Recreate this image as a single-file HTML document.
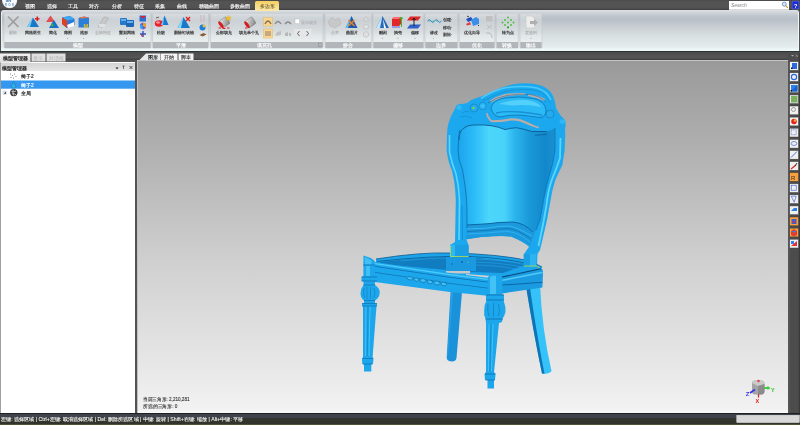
<!DOCTYPE html>
<html><head><meta charset="utf-8">
<style>
*{margin:0;padding:0;box-sizing:border-box}
html,body{width:800px;height:425px;overflow:hidden;background:#535353;font-family:"Liberation Sans",sans-serif}
.a{position:absolute}
#top{left:0;top:0;width:800px;height:10px;background:linear-gradient(#4a4a4a,#545454 2px,#525252 8px,#3c3c3c 10px)}
.mi{position:absolute;top:2px;font-size:5px;line-height:7px;color:#e8e8e8;white-space:nowrap}
#ribbon{left:1px;top:10px;width:798px;height:41px;border-radius:3px 3px 0 0;border-right:1px solid #eef6f6;border-left:1px solid #e8eef0;
 background:linear-gradient(#dde1e5 0px,#d2d7dc 2px,#bec5cc 6px,#b9c0c7 10px,#c6ccd1 16px,#d9e0e1 26px,#e3ebeb 36px,#e8f2f2 38.5px,#f2fafa 39px,#f2fafa 41px)}
#band{left:0;top:51px;width:800px;height:9px;background:linear-gradient(#2e3434 0px,#2e3434 1px,#4c4c4c 1px,#565656 7px,#444 8px)}
#lp{left:0;top:62px;width:135px;height:351px;background:#fff;border-left:1px solid #a0a0a0}
#lph{left:0;top:1px;width:134px;height:8px;background:linear-gradient(#d4d4d4,#e6e6e6)}
#vp{left:137px;top:60px;width:651px;height:353px;background:linear-gradient(#9a9a9a 0%,#b0b0b0 25%,#cecece 55%,#e6e6e6 85%,#f2f2f2 99%,#fafafa 100%);border-left:1px solid #c0c0c0;border-top:1px solid #c4c4c4}
#rt{left:788px;top:53px;width:12px;height:360px;background:#4c4c4c}
#sb{left:0;top:413px;width:800px;height:12px;background:linear-gradient(#202024 0px,#202024 1px,#40424c 1px,#40424c 4.5px,#34362e 5px,#32342c 10.5px,#4c5434 11px)}
.txt{position:absolute;font-size:5px;line-height:6px;white-space:nowrap}
svg{position:absolute;left:0;top:0;will-change:transform}
</style></head><body>
<div id="top" class="a"></div>
<div id="ribbon" class="a"></div>
<div id="band" class="a"></div>
<div id="lp" class="a"><div id="lph" class="a"></div></div>
<div id="vp" class="a"></div>
<div id="rt" class="a"></div>
<div id="sb" class="a"></div>

<svg width="800" height="425" viewBox="0 0 800 425" font-family="Liberation Sans">
<defs>
 <linearGradient id="tabY" x1="0" y1="0" x2="0" y2="1"><stop offset="0" stop-color="#f4cf62"/><stop offset="1" stop-color="#fde9a6"/></linearGradient>
 <linearGradient id="grpBg" x1="0" y1="0" x2="0" y2="1"><stop offset="0" stop-color="#ffffff" stop-opacity=".35"/><stop offset=".5" stop-color="#ffffff" stop-opacity=".15"/><stop offset="1" stop-color="#ffffff" stop-opacity=".45"/></linearGradient>
 <linearGradient id="panelG" x1="0" y1="0" x2="1" y2="0"><stop offset="0" stop-color="#1ca4ec"/><stop offset=".17" stop-color="#2cbcf8"/><stop offset=".32" stop-color="#4cd6fa"/><stop offset=".48" stop-color="#48d2fa"/><stop offset=".58" stop-color="#2cb6ee"/><stop offset=".74" stop-color="#1a98d8"/><stop offset=".9" stop-color="#1288cc"/><stop offset="1" stop-color="#1a90d0"/></linearGradient>
 <linearGradient id="tabG" x1="0" y1="0" x2="0" y2="1"><stop offset="0" stop-color="#f4f4f4"/><stop offset="1" stop-color="#d8d8d8"/></linearGradient>
</defs>

<!-- ===== top menu ===== -->
<circle cx="9.6" cy="0.6" r="7.6" fill="#e2e6ea"/>
<circle cx="9.6" cy="0.6" r="6.8" fill="#f8fafc"/>
<text x="5.5" y="1.6" font-size="4.2" font-weight="bold" fill="#2a6ab0">SR</text>
<text x="5" y="5.6" font-size="2.6" font-weight="bold" fill="#4a88c8" textLength="9">ROE</text>
<g font-size="5" fill="#f4f4f4" stroke="#f4f4f4" stroke-width=".15">
 <text x="25" y="8">视图</text><text x="47" y="8">选择</text><text x="68" y="8">工具</text>
 <text x="89" y="8">对齐</text><text x="112" y="8">分析</text><text x="134" y="8">特征</text>
 <text x="155" y="8">采集</text><text x="177" y="8">曲线</text><text x="199" y="8">精确曲面</text>
 <text x="230" y="8">参数曲面</text>
</g>
<rect x="255" y="1" width="24" height="10" rx="1.5" fill="url(#tabY)"/>
<text x="260" y="8" font-size="5" fill="#3a3320">多边形</text>
<!-- search -->
<rect x="729" y="1" width="60" height="8.8" fill="#fff"/>
<text x="731" y="7.3" font-size="5" font-style="italic" fill="#888">Search</text>
<circle cx="784.3" cy="4.2" r="2" fill="#d8e8f4" stroke="#4a7ab0" stroke-width=".7"/>
<line x1="785.8" y1="5.8" x2="787.8" y2="7.8" stroke="#c09a30" stroke-width="1.1"/>
<rect x="791" y="0" width="9" height="10" fill="#3a3a3a"/>
<rect x="792" y="1" width="7" height="8" fill="#1c2cd0" stroke="#8090e0" stroke-width=".5"/>
<text x="794" y="7.5" font-size="5.5" font-weight="bold" fill="#fff">?</text>

<!-- ===== ribbon groups ===== -->
<g stroke="#c2c6ca" stroke-width=".6" fill="url(#grpBg)">
 <rect x="4" y="13.3" width="147" height="35" rx="1.5"/>
 <rect x="152.5" y="13.3" width="56" height="35" rx="1.5"/>
 <rect x="210.5" y="13.3" width="112.5" height="35" rx="1.5"/>
 <rect x="325" y="13.3" width="46.7" height="35" rx="1.5"/>
 <rect x="373" y="13.3" width="50.8" height="35" rx="1.5"/>
 <rect x="425" y="13.3" width="32.8" height="35" rx="1.5"/>
 <rect x="459.3" y="13.3" width="35.5" height="35" rx="1.5"/>
 <rect x="496.3" y="13.3" width="22" height="35" rx="1.5"/>
 <rect x="520" y="13.3" width="22" height="35" rx="1.5"/>
</g>
<g fill="#b2b6ba">
 <rect x="4.3" y="42" width="146.4" height="6.2"/>
 <rect x="152.8" y="42" width="55.4" height="6.2"/>
 <rect x="210.8" y="42" width="111.9" height="6.2"/>
 <rect x="325.3" y="42" width="46.1" height="6.2"/>
 <rect x="373.3" y="42" width="50.2" height="6.2"/>
 <rect x="425.3" y="42" width="32.2" height="6.2"/>
 <rect x="459.6" y="42" width="34.9" height="6.2"/>
 <rect x="496.6" y="42" width="21.4" height="6.2"/>
 <rect x="520.3" y="42" width="21.4" height="6.2"/>
</g>
<g font-size="4.5" fill="#fff" stroke="#fff" stroke-width=".15" text-anchor="middle">
 <text x="77.5" y="47.2">模型</text><text x="180.5" y="47.2">平滑</text><text x="264" y="47.2">填充孔</text>
 <text x="348.3" y="47.2">拼合</text><text x="398.4" y="47.2">偏移</text><text x="441.4" y="47.2">边界</text>
 <text x="477" y="47.2">优化</text><text x="507.3" y="47.2">转换</text><text x="531" y="47.2">输出</text>
</g>
<rect x="318.5" y="43" width="3.5" height="3.5" fill="none" stroke="#888" stroke-width=".5"/>

<!-- button labels -->
<g font-size="4.4" fill="#3c3c3c" stroke="#3c3c3c" stroke-width=".18" text-anchor="middle">
 <text x="13" y="34.1" fill="#a4a4a4" stroke="#b4b4b4" stroke-width=".1">删除</text>
 <text x="33" y="34.1">网格医生</text>
 <text x="52.5" y="34.1">简化</text>
 <text x="67.5" y="34.1">薄图</text>
 <text x="83.5" y="34.1">流形</text>
 <text x="103" y="34.1" fill="#a4a4a4" stroke="#b4b4b4" stroke-width=".1">去除特征</text>
 <text x="126.5" y="34.1">重划网格</text>
 <text x="160.5" y="34.1">松散</text>
 <text x="184.3" y="34.1">删除钉状物</text>
 <text x="223.7" y="34.1">全部填充</text>
 <text x="249.3" y="34.1">填充单个孔</text>
 <text x="334.5" y="34.1" fill="#a4a4a4" stroke="#b4b4b4" stroke-width=".1">合并</text>
 <text x="351.5" y="34.1">曲面片</text>
 <text x="382.5" y="34.1">雕刻</text>
 <text x="398" y="34.1">抽壳</text>
 <text x="415" y="34.1">偏移</text>
 <text x="433.5" y="34.1">修改</text>
 <text x="472.3" y="34.1">优化向导</text>
 <text x="508" y="34.1">转为点</text>
 <text x="531" y="34.1" fill="#a4a4a4" stroke="#b4b4b4" stroke-width=".1">发送到</text>
</g>
<g font-size="4.4" fill="#3c3c3c" stroke="#3c3c3c" stroke-width=".15">
 <text x="443" y="21">创建·</text><text x="443" y="28.5">移动·</text><text x="443" y="36">删除·</text>
 <text x="300.5" y="23.8" fill="#a8a8a8" stroke="#b8b8b8" stroke-width=".05">显示填充</text>
</g>
<g fill="#666">
 <circle cx="67.5" cy="38.3" r=".45"/><circle cx="83.5" cy="38.3" r=".45"/><circle cx="126.5" cy="38.3" r=".45"/>
 <circle cx="382.5" cy="38.3" r=".45"/><circle cx="398" cy="38.3" r=".45"/><circle cx="415" cy="38.3" r=".45"/>
 <circle cx="433.5" cy="38.3" r=".45"/><circle cx="531" cy="38.3" r=".45"/>
</g>

<!-- ribbon icons -->
<!-- delete X -->
<path d="M8 16.5 L18.5 27 M18.5 16.5 L8 27" stroke="#9c9c9c" stroke-width="1.6" fill="none"/>
<!-- mesh doctor -->
<path d="M33 17.5 L39 27 L27 27 Z" fill="#1a78c8"/><path d="M33 17.5 L30 27 L27 27 Z" fill="#70d0f0"/>
<path d="M36.5 16.5 h1.5 v1.5 h1.5 v1.5 h-1.5 v1.5 h-1.5 v-1.5 h-1.5 v-1.5 h1.5z" fill="#e02020"/>
<!-- simplify -->
<path d="M50.5 15.5 L55 22 L46 22 Z" fill="#e05050"/><path d="M54 20 L59 28 L49 28 Z" fill="#1a70c8"/><path d="M51 23 l3 2 l-2 2z" fill="#30c030"/>
<!-- shell -->
<path d="M62 17.5 L70 16 L74.5 19 L74.5 25 L67 28 L62 24 Z" fill="#2a7ad8"/><path d="M62 17.5 L70 16 L74.5 19 L67 20.5Z" fill="#40a8f0"/><path d="M62 17.5 L67 20.5 L67 28 L62 24Z" fill="#e04020"/><path d="M67 25 L74 22 L74 26 L68 28Z" fill="#fff"/>
<!-- manifold -->
<path d="M78.5 18 L84 16.5 L89 17.5 L89 27.5 L78.5 27.5Z" fill="#2a80d8"/><path d="M78.5 18 L84 16.5 L89 17.5 L83 18.5Z" fill="#f07040"/><text x="83.5" y="27.5" font-size="6" font-weight="bold" fill="#e8c020">M</text>
<!-- remove feature (gray) -->
<path d="M98 27 L104 17 L108.5 18 L103 27Z" fill="#c8c8c8" stroke="#a0a0a0" stroke-width=".5"/><path d="M99 24 h6 v3 h-6z" fill="#e0e0e0"/>
<!-- remesh -->
<rect x="120" y="18" width="7" height="7" rx="1" fill="#2878c8"/><rect x="126" y="20" width="8" height="7" rx="1" fill="#1e66b8"/><path d="M121 19 h5 v2 h-5z M127 21 h6 v2 h-6z" fill="#60b0f0"/>
<!-- small 3 icons -->
<rect x="139.5" y="15.5" width="6.5" height="6" fill="#2a70d0"/><path d="M140 16 l3 2.5 l3 -2.5z" fill="#e02030"/>
<path d="M140 24 l3 -1.5 l3 1.5 v4 l-3 1.5 l-3 -1.5z" fill="#7050d0"/><path d="M143 22.5 l3 1.5 v4 l-3 -2z" fill="#f0a020"/><path d="M140 24 l3 1.5 v4 l-3 -1.5z" fill="#30a0f0"/>
<path d="M140 34 h6 M143 31 v6" stroke="#3050c0" stroke-width="1.4"/><circle cx="142" cy="35.5" r="1" fill="#e03020"/>
<!-- smooth relax -->
<ellipse cx="159" cy="23.5" rx="4.2" ry="3.2" fill="#e82030"/><ellipse cx="158" cy="22.5" rx="2" ry="1.2" fill="#ff9090"/>
<path d="M164.5 15.5 L168.5 25 L161 25 Z" fill="#1a78d0"/><path d="M164.5 15.5 L163 25 L161 25Z" fill="#70c8f0"/>
<path d="M156 18 l3 -1" stroke="#333" stroke-width=".7"/>
<!-- remove spikes -->
<path d="M183.5 17 L190 28 L177.5 28 Z" fill="#1a78c8"/><path d="M183.5 17 L181 28 L177.5 28Z" fill="#80d8f8"/>
<path d="M186 17 l4 4 M190 17 l-4 4" stroke="#e02020" stroke-width="1.3"/>
<!-- smooth small -->
<path d="M201 15 v7 M204 15 v7" stroke="#d0b0b8" stroke-width="1"/>
<circle cx="202.5" cy="27.5" r="3" fill="#1a80e0"/><circle cx="204" cy="26" r="1.4" fill="#f0c020"/>
<path d="M199.5 35 l4 -2 l3 1.5 l-4 2z" fill="#8a5a30"/>
<!-- fill all -->
<defs><linearGradient id="buck" x1="0" y1="0" x2="1" y2="1"><stop offset="0" stop-color="#f0f0f0"/><stop offset=".5" stop-color="#b8b8b8"/><stop offset="1" stop-color="#808080"/></linearGradient></defs>
<g transform="rotate(-35 224 22)"><rect x="219.5" y="18.5" width="9" height="8" rx="1.5" fill="url(#buck)" stroke="#707070" stroke-width=".4"/><ellipse cx="220" cy="22.5" rx="1.6" ry="4" fill="#d02020"/></g>
<path d="M228.5 15.2 l.9 1.9 l2 .3 l-1.5 1.4 l.4 2 l-1.8 -1 l-1.8 1 l.4 -2 l-1.5 -1.4 l2 -.3z" fill="#f4c418" stroke="#c09010" stroke-width=".2"/>
<path d="M218.5 28 h2.5 M222.5 28.5 h3 M227 28 h2.5 M220 25.8 h1.5" stroke="#d82020" stroke-width="1"/>
<!-- fill single -->
<g transform="rotate(-35 250 22)"><rect x="245.5" y="18.5" width="9" height="8" rx="1.5" fill="url(#buck)" stroke="#707070" stroke-width=".4"/><ellipse cx="246" cy="22.5" rx="1.6" ry="4" fill="#d02020"/></g>
<path d="M245 28 h2.5 M246 25.8 h1.5" stroke="#d82020" stroke-width="1"/>
<!-- small fill icons -->
<rect x="263.5" y="17.7" width="9" height="8.3" fill="#f8d890" stroke="#e8b860" stroke-width=".5"/>
<rect x="263.5" y="29" width="9" height="9" fill="#f8d890" stroke="#e8b860" stroke-width=".5"/>
<path d="M265 24 q3 -6 6 0" fill="none" stroke="#8a7050" stroke-width="1.4"/>
<path d="M275 24 q3 -5 6 0" fill="none" stroke="#8a8a8a" stroke-width="1.4"/>
<path d="M285 24 q3 -4 6 0" fill="none" stroke="#8a8a8a" stroke-width="1.4"/>
<rect x="265" y="31" width="6" height="5" fill="#c8a880"/>
<path d="M275 36 l2 -4 l4 -1 v4z" fill="#c0c0c0"/>
<path d="M285 36 v-3 l3 -1 v4z M289 33 h2 v3 h-2z" fill="#b8b8b8"/>
<rect x="295" y="19" width="4.5" height="4.7" fill="#fff" stroke="#b0b0b0" stroke-width=".4"/>
<rect x="294" y="29" width="17.5" height="9" fill="#e4e6e8"/>
<path d="M299.5 31 l-2 2.5 l2 2.5 M306.5 31 l2 2.5 l-2 2.5" stroke="#444" stroke-width=".8" fill="none"/>
<!-- merge (gray) -->
<path d="M328 22 l4 -5 l3 3 l4 -2 l2 6 l-6 4 l-5 -2z" fill="#c8c8c8" stroke="#a8a8a8" stroke-width=".4"/>
<!-- patch -->
<path d="M351.5 16 L357.5 28 L345.5 28Z" fill="#1e5aa8"/><path d="M351.5 16 L348 28 L345.5 28Z" fill="#60c0f0"/>
<path d="M348.5 20 l6 6 M354.5 20 l-6 6" stroke="#f08020" stroke-width="1.4"/>
<g fill="#e0e0e0" stroke="#b0b0b0" stroke-width=".5"><path d="M363.5 21 l2.5 -4.5 l2.5 4.5z"/><rect x="363.5" y="24.5" width="5" height="4.5" rx="2"/><path d="M363.5 33 l2.5 -1.5 l2.5 1.5 v3 l-2.5 1.5 l-2.5 -1.5z"/></g>
<!-- sculpt -->
<path d="M382.5 16 L389 28 L376 28Z" fill="#2a68b8"/><path d="M382.5 16 L380 28 L376 28Z" fill="#c0e8f8"/><path d="M383 19 L386 28 L384 28Z" fill="#fff"/>
<!-- shell thicken -->
<path d="M392 19 l2 -2 h7 v7 l-2 2 h-7z" fill="#e02828"/><path d="M392 19 l2 -2 h7 l-2 2z" fill="#ff7070"/><path d="M401.5 27 v-10 M400 19 l1.5 -2 l1.5 2" stroke="#30c030" stroke-width="1" fill="none"/><path d="M392 27 h8" stroke="#6060e0" stroke-width="1"/>
<!-- offset -->
<path d="M410 16.5 h11 l-3 4 h-11z" fill="#e02828"/><path d="M410 24.5 h11 l-3 4 h-11z" fill="#3060c8"/><path d="M414 18 v8 M412.5 20 l1.5 -2 l1.5 2" stroke="#111" stroke-width=".9" fill="none"/>
<!-- boundary modify -->
<path d="M427.5 21 q1.7 -3 3.5 0 t3.5 0 t3.5 0 t3.5 0" fill="none" stroke="#1a8ad8" stroke-width="1"/>
<g fill="#30a030"><circle cx="429" cy="21" r=".6"/><circle cx="433" cy="21" r=".6"/><circle cx="437" cy="21" r=".6"/></g>
<!-- optimize wizard -->
<path d="M466 19 l5 -2 l2 3 l-5 2z" fill="#2050c0"/><path d="M471 20 l5 -3 l3 2 v5 l-6 2z" fill="#3a90e8"/><path d="M466 24 l4 -2 l1 2.5 l-4 1z" fill="#e04040"/>
<path d="M469 17 l-2 -1 M478 25 l1 1" stroke="#222" stroke-width=".8"/>
<g fill="#c0c0c0"><rect x="486" y="16" width="6.5" height="5.5"/></g>
<path d="M487 25 l5 4 M487 29 l5 -4" stroke="#b8b8b8" stroke-width=".8"/>
<path d="M486 33 h4 l2 3 v2" stroke="#b8b8b8" stroke-width="1" fill="none"/>
<!-- convert to points -->
<g fill="#50c040"><circle cx="508" cy="17.5" r="1"/><circle cx="505" cy="20" r="1"/><circle cx="511" cy="20" r="1"/><circle cx="502.5" cy="22.5" r="1"/><circle cx="508" cy="22.5" r="1"/><circle cx="513.5" cy="22.5" r="1"/><circle cx="505" cy="25" r="1"/><circle cx="511" cy="25" r="1"/><circle cx="508" cy="27.3" r="1.1" fill="#30a020"/></g>
<!-- send to (gray) -->
<path d="M526 16 h6 l3 3 v9 h-9z" fill="#ececec" stroke="#c0c0c0" stroke-width=".5"/><path d="M530 21 h4 v-2 l4 3.5 l-4 3.5 v-2 h-4z" fill="#b0b0b0"/>

<!-- ribbon bottom edge -->
<rect x="1" y="48.6" width="798" height="2.4" fill="#eef8f8"/>

<!-- ===== left panel tabs ===== -->
<rect x="0" y="53.5" width="30.5" height="9" fill="url(#tabG)"/>
<rect x="31.5" y="53.5" width="14" height="8" fill="#f0f0f0" opacity=".9"/>
<rect x="46.5" y="53.5" width="19" height="8" fill="#f0f0f0" opacity=".9"/>
<g font-size="4.6">
 <text x="2.5" y="60" fill="#222" stroke="#222" stroke-width=".2">模型管理器</text>
 <text x="33" y="59.6" fill="#b0b0b0">显示</text>
 <text x="48.5" y="59.6" fill="#b0b0b0">对话框</text>
 <text x="2" y="69.6" fill="#222" stroke="#222" stroke-width=".2">模型管理器</text>
</g>
<path d="M115.5 67.5 h3 l-1.5 1.8z" fill="#111"/>
<path d="M123.5 66 v3 M122.5 66 h2" stroke="#222" stroke-width=".6"/>
<path d="M129.5 66 l3 3 M132.5 66 l-3 3" stroke="#222" stroke-width=".7"/>
<!-- tree -->
<rect x="1" y="80.5" width="134" height="8.2" fill="#3497f0"/>
<g font-size="4.8" stroke-width=".15">
 <text x="21" y="78.2" fill="#222" stroke="#222">椅子2</text>
 <text x="21" y="86.8" fill="#fff" stroke="#fff">椅子2</text>
 <text x="21" y="95.3" fill="#222" stroke="#222">全局</text>
</g>
<g fill="#666"><circle cx="10.5" cy="74" r=".5"/><circle cx="12.5" cy="75.5" r=".5"/><circle cx="11" cy="77.5" r=".5"/><circle cx="14.5" cy="74" r=".5"/><circle cx="16" cy="76.5" r=".5"/><circle cx="13.5" cy="78" r=".5"/></g>
<path d="M13.5 81.5 l2.5 5 a2.6 2.6 0 0 1 -5 0z" fill="#30b0e8" stroke="#106090" stroke-width=".4"/>
<rect x="3" y="91" width="3.5" height="3.5" fill="#dfe6f0" stroke="#b0b8c0" stroke-width=".3"/><path d="M4 93.8 l2 -2 v2z" fill="#222"/>
<circle cx="13.8" cy="92.6" r="3.7" fill="#3a3a3a"/><path d="M11.5 91.5 q2 1 4.5 -.5 M12 94 q2 -1 4 .8 M13.2 89.5 q-1 3 .5 6" stroke="#f0f0f0" stroke-width=".7" fill="none"/>

<!-- ===== viewport tabs ===== -->
<path d="M139.5 60 L146 53.5 H160 V60Z" fill="#e8eaec"/>
<rect x="160.5" y="53.5" width="17" height="6.5" fill="#f4f4f4"/>
<rect x="178.5" y="53.5" width="15" height="6.5" fill="#f4f4f4"/>
<g font-size="4.6" stroke-width=".15">
 <text x="147.5" y="58.8" fill="#222" stroke="#222">图形</text>
 <text x="163.5" y="58.8" fill="#444" stroke="#444">开始</text>
 <text x="181" y="58.8" fill="#444" stroke="#444">脚本</text>
</g>
<path d="M791 55 h3 l-1.5 1.5z" fill="#aaa"/><path d="M795.5 54.5 l2.5 2.5 M798 54.5 l-2.5 2.5" stroke="#aaa" stroke-width=".5"/>

<!-- ===== right toolbar ===== -->
<rect x="788" y="60" width="2" height="353" fill="#555"/>
<rect x="798.8" y="53" width="1.2" height="360" fill="#3a3a3a"/>
<g id="rtb" stroke="#3c3c3c" stroke-width=".5">
 <rect x="789.7" y="61.6" width="8.8" height="8.8" fill="#f0f0f0"/>
 <rect x="789.7" y="72.7" width="8.8" height="8.8" fill="#f0f0f0"/>
 <rect x="789.7" y="83.8" width="8.8" height="8.8" fill="#f0f0f0"/>
 <rect x="789.7" y="94.9" width="8.8" height="8.8" fill="#e8e8e8"/>
 <rect x="789.7" y="106" width="8.8" height="8.8" fill="#f0f0f0"/>
 <rect x="789.7" y="117.1" width="8.8" height="8.8" fill="#f0f0f0"/>
 <rect x="789.7" y="128.2" width="8.8" height="8.8" fill="#f0f0f0"/>
 <rect x="789.7" y="139.3" width="8.8" height="8.8" fill="#f0f0f0"/>
 <rect x="789.7" y="150.4" width="8.8" height="8.8" fill="#f0f0f0"/>
 <rect x="789.7" y="161.5" width="8.8" height="8.8" fill="#f0f0f0"/>
 <rect x="789.7" y="172.6" width="8.8" height="8.8" fill="#f8a040"/>
 <rect x="789.7" y="183.7" width="8.8" height="8.8" fill="#f0f0f0"/>
 <rect x="789.7" y="194.8" width="8.8" height="8.8" fill="#f0f0f0"/>
 <rect x="789.7" y="205.9" width="8.8" height="8.8" fill="#f0f0f0"/>
 <rect x="789.7" y="217" width="8.8" height="8.8" fill="#f8a040"/>
 <rect x="789.7" y="228.1" width="8.8" height="8.8" fill="#f8a040"/>
 <rect x="789.7" y="239.2" width="8.8" height="8.8" fill="#f0f0f0"/>
</g>
<g>
 <rect x="792" y="63" width="5" height="6" fill="#2a6ae0"/><rect x="791" y="67.5" width="1.5" height="1.5" fill="#111"/>
 <circle cx="794" cy="77" r="2.6" fill="none" stroke="#2a6ae0" stroke-width="1.2"/>
 <path d="M791 91.5 v-6.5 h6.5 v6.5z" fill="#2a80e8"/><path d="M791 91.5 l6.5 -6.5 v6.5z" fill="#1a60c8"/><rect x="790.5" y="90" width="1.5" height="1.5" fill="#111"/>
 <rect x="791" y="96" width="6.5" height="6.5" fill="#7ab060"/>
 <circle cx="793.5" cy="109.5" r="2" fill="none" stroke="#888" stroke-width=".8"/>
 <circle cx="794" cy="121.5" r="2.8" fill="#e82020"/><circle cx="795" cy="120.5" r="1.3" fill="#f0b020"/>
 <rect x="791.2" y="129.8" width="5" height="5" fill="none" stroke="#2a50d0" stroke-width=".6" stroke-dasharray="1 .6"/>
 <ellipse cx="794" cy="143.5" rx="2.8" ry="2" fill="none" stroke="#2a50d0" stroke-width=".6"/>
 <path d="M791 157.5 l6 -6" stroke="#2a50d0" stroke-width=".8"/><path d="M791 169 l5 -4" stroke="#e02020" stroke-width="1.2"/><path d="M795 166 l2 -3" stroke="#333" stroke-width="1"/>
 <text x="791" y="180" font-size="6" fill="#333">R</text>
 <rect x="791.2" y="185.2" width="5" height="5" fill="none" stroke="#2a50d0" stroke-width=".6"/>
 <path d="M791.2 196.2 h5 l-2 6z" fill="none" stroke="#2a50d0" stroke-width=".6"/>
 <path d="M791 211 l3 -3 h3 v3z" fill="#2a80e8"/>
 <path d="M791.5 219 h5 v5 h-5z" fill="#3a60d0"/><path d="M792 222 h4" stroke="#e03030" stroke-width="1"/>
 <path d="M791 231 l3 -2 l3 2 v4 l-3 1.5 l-3 -1.5z" fill="#e04030"/><path d="M791 231 l3 1.5 l3 -1.5" fill="#3080f0"/>
 <path d="M791 246 l6 -5 v5z" fill="#e03030"/><path d="M791 241 h3 v3 h-3z" fill="#3080f0"/>
</g>

<!-- ===== viewport info ===== -->
<g font-size="4.9" fill="#333" stroke="#333" stroke-width=".12">
 <text x="143" y="401.2" textLength="46.5" lengthAdjust="spacingAndGlyphs">当前三角形: 2,210,281</text>
 <text x="143" y="408.2" textLength="34.5" lengthAdjust="spacingAndGlyphs">所选的三角形: 0</text>
</g>

<!-- ===== status bar ===== -->
<text x="1" y="421" font-size="5.1" fill="#f4f4f4" stroke="#f4f4f4" stroke-width=".12" textLength="242.5" lengthAdjust="spacingAndGlyphs">左键: 选择区域 | Ctrl+左键: 取消选择区域 | Del: 删除所选区域 | 中键: 旋转 | Shift+右键: 缩放 | Alt+中键: 平移</text>
<rect x="736.8" y="415.3" width="62.5" height="7.2" fill="#d8d8d8" stroke="#f0f0f0" stroke-width=".5"/>

<!-- ===== triad ===== -->
<g>
 <path d="M752 383 Q752 380.5 755 380.5 L761 380.5 Q764.5 380.5 764.5 384 L764.5 391 Q764.5 394.5 761 394.5 L755 394.5 Q752 394.5 752 391Z" fill="#a4a4a4"/>
 <path d="M752 383 Q752 380.5 755 380.5 L761 380.5 Q764.5 380.5 764.5 384 L758 386 Z" fill="#cacaca"/>
 <path d="M758 386 L764.5 384 L764.5 391 Q764.5 394.5 761 394.5 L758 394.5Z" fill="#8c8c8c"/>
 <circle cx="758.5" cy="381" r="1.3" fill="#e04848"/>
 <path d="M755 389.5 L750 393" stroke="#3838e8" stroke-width="1.8"/>
 <text x="745.8" y="396" font-size="6" font-weight="bold" fill="#3434e8">Z</text>
 <path d="M764 388 h4.5" stroke="#38c838" stroke-width="1.8"/><path d="M767.5 386 l3 2 l-3 2z" fill="#38c838"/>
 <text x="771" y="392" font-size="5.5" font-weight="bold" fill="#30c030">Y</text>
 <path d="M758.5 394 v3.5" stroke="#d03030" stroke-width="1.3"/>
 <text x="755.6" y="403.2" font-size="5.5" font-weight="bold" fill="#e02020">X</text>
</g>

<!-- ===== chair ===== -->
<g id="chair">
 <!-- rear legs -->
 <path d="M450.9 286 L462.5 286 L456.5 358 Q456 361.5 451.5 361.5 Q446.5 361 446.7 357.5 Z" fill="#1a92da"/>
 <path d="M451.5 288 L453.5 288 L448 356 L447.2 356Z" fill="#28a8ec" opacity=".7"/>
 <path d="M525.6 284 L540 284 Q542 330 551.5 371 Q549 374.5 542 373.5 C535 340 530 310 525.6 284Z" fill="#34c2f8"/>
 <path d="M525.6 284 L529.5 284 C533 310 538 340 544.5 373.8 L542 373.5 C535 340 530 310 525.6 284Z" fill="#0e74b6"/>
 <!-- back outer -->
 <path d="M455.4 108 Q456 104.5 459.5 104 Q464 104 467 103 Q472 99 478 97.5 Q485 95.5 490 93 Q502 86 515 84 Q530 82 541 85.5 Q550 89 553 96 Q555.5 102 556 108 Q558 112 561 116 Q565 119 565.5 123 Q566 126 565 128 Q565.5 135 565 140 L564.7 150 L562.4 165 L557.6 175 L555.3 180 Q552 190 550.6 200 L547 220 L542.4 240 L540 250 L537.5 254 L537 266 L524 266 L524 254 L529 246.7 Q522 241 511 236.6 Q503 235 481.3 237.1 L466.4 239.2 L468.5 245 L468.5 257 L450 257 L450 245 L455 242 L455.8 200 Q455.5 190 454 180 L451.8 170 Q448 162 446.6 150 L447 135 Q447 130 448 125 Q450 118 452 114 Q454 111 455.4 108Z" fill="#1ca8ee"/>
 <!-- crest openings -->
 <path d="M490 100.4 Q497 96 505 94 Q515 92.5 525 93 L526 95 Q515 95 506 96.5 Q498 98.5 491 102.5Z" fill="#bcaca4"/>
 <path d="M528 94 Q538 95 545 99 L544 101 Q537 97.5 528 96Z" fill="#bcaca4"/>
 <path d="M487.4 112.7 Q489 118 492 120.2 Q502 120 511 118.3 Q516 118 520.4 119.3 Q528 122 535.5 125.8 L539 126.8 L538.5 128.5 Q530 126 520 121.5 Q515 120.3 511 120.5 Q501 122.5 491.5 122.3 Q487 119 486 113.5Z" fill="#bcaca4"/>
 <!-- crest cushion -->
 <path d="M491 108 Q493 100 505 98 Q520 96 533 98.5 Q545 101 546 110 Q546 117 540 117.5 Q530 116 520 115 Q510 114.5 500 117 Q493 116 491 108Z" fill="#2cbaf6"/>
 <path d="M499 104 Q510 99.5 526 100 Q538 101.5 541 107 Q528 104 512 105.5Z" fill="#64dcfc" opacity=".7"/>
 <path d="M491 108 Q493 100 505 98 Q520 96 533 98.5 Q545 101 546 110 Q546 117 540 117.5 Q530 116 520 115 Q510 114.5 500 117 Q493 116 491 108Z" fill="none" stroke="#0e6aa8" stroke-width=".7"/>
 <path d="M496 113 Q505 111 520 112 Q532 113 542 115" fill="none" stroke="#1a90d4" stroke-width="1.4"/>
 <path d="M488 103 Q497 97 507 95.5 Q520 93.5 530 94.5 Q540 96 546 102" fill="none" stroke="#0e64a2" stroke-width=".5"/>
 <path d="M481 98.5 Q490 92 502 88.5 Q520 85 537 88 Q547 91 551 100" fill="none" stroke="#4ccaf8" stroke-width="1.5"/>
 <path d="M483 101 Q494 95 505 91.5 Q522 88 536 90.5 Q546 93 550 103" fill="none" stroke="#1282c4" stroke-width=".5"/>
 <!-- scrolls -->
 <circle cx="474" cy="108" r="4" fill="#22acee" stroke="#1478b8" stroke-width=".6"/>
 <circle cx="482.7" cy="106" r="3.6" fill="#2cb4f4" stroke="#1478b8" stroke-width=".6"/>
 <circle cx="482.7" cy="106" r="1.5" fill="#3cc4fa"/>
 <circle cx="550" cy="114" r="4" fill="#22acee" stroke="#1478b8" stroke-width=".6"/>
 <circle cx="459" cy="107.5" r="2.6" fill="#30b8f6"/>
 <ellipse cx="562.5" cy="121.5" rx="3" ry="2.3" fill="#30b8f6"/>
 <path d="M462 113 q4 -3 8 -1 M460 117 q6 -2 12 1" stroke="#1480c0" stroke-width=".5" fill="none"/>
 <rect x="472.5" y="107" width="2" height="2" fill="#80e020"/>
 <!-- inner panel -->
 <path d="M459 140 Q459 132 463 128.7 Q467 125 473 125 Q485 124.5 492 125.8 Q499 127 505 129.6 Q511 128 516.6 127.7 Q524 129 531.7 131.5 L546.8 131.5 Q552 130 555 128 L555 150 Q553 165 549.4 175 Q546 187 543.5 200 L540 220 L535 232 Q524 223 513 222 Q500 222 487 223.8 L467 225 L467 220 Q467 200 465.6 190 Q464 178 462.5 170 Q458 160 458 150 Q458.5 140 459.5 130Z" fill="url(#panelG)"/>
 <path d="M459 140 Q459 132 463 128.7 Q467 125 473 125 Q485 124.5 492 125.8 Q499 127 505 129.6 Q511 128 516.6 127.7 Q524 129 531.7 131.5 L546.8 131.5" fill="none" stroke="#0c5a90" stroke-width=".9"/>
 <path d="M535 135.3 L546.8 134.3" fill="none" stroke="#0c5a90" stroke-width=".7"/>
 <path d="M467 225 L487 223.8 Q500 222 513 222 Q524 223 533 232" fill="#1a94d8" stroke="none"/>
 <path d="M466.5 225 L487 223.8 Q500 222 513 222 Q524 223 535 232 L530 246 Q522 241 511 236.6 Q503 235 481.3 237.1 L466.4 239.2Z" fill="#1c98dc"/>
 <path d="M467 225 L487 223.8 Q500 222 513 222 Q524 223 533 232" fill="none" stroke="#0a5a90" stroke-width=".8"/>
 <path d="M467 229 L487 228 Q500 226 508 226 Q516 226.5 532 236" fill="none" stroke="#36bcf4" stroke-width=".9"/>
 <path d="M467 231.5 L487 230.5 Q500 228.5 508 228.5 Q517 229 531 239" fill="none" stroke="#0e66a4" stroke-width=".6"/>
 <path d="M467 234 L487 233 Q500 231.5 508 231.5 Q518 232 530 242" fill="none" stroke="#34b8f2" stroke-width=".8"/>
 
 <path d="M459.5 130 Q458.5 140 458 150 Q458 160 462.5 170 Q464 178 465.6 190 Q467 200 467 220 L467 228" fill="none" stroke="#0e64a0" stroke-width=".7"/>
 <path d="M555 128 L555 150 Q553 165 549.4 175 Q546 187 543.5 200 L540 220 L536 230" fill="none" stroke="#0e64a0" stroke-width=".6"/>
 <path d="M449.5 135 L449.5 152 Q452 164 456 174 Q459 186 459.5 200 L459 240" fill="none" stroke="#5cd6fc" stroke-width="1.6"/>
 <path d="M462 205 L462.5 240" fill="none" stroke="#1280c4" stroke-width=".6"/>
 <path d="M560.5 138 L560 158 Q556 170 552.5 178 Q548 190 546.5 205 L543.5 222 L538.5 246" fill="none" stroke="#5cd6fc" stroke-width="1.8"/>
 <!-- seat back / top surface -->
 <path d="M376 259 Q420 252 450 253 Q500 254 530 261 L542 267 L541 272 L503 278 L489 279 L450 274 L376 264Z" fill="#1ca4ea"/>
 <path d="M380 262 Q440 256 470 257 L528 264 L503 273 L470 272 L380 264Z" fill="#127cc0"/>
 <path d="M377 261.5 Q430 255.5 470 256.5 Q505 258 532 264.5" fill="none" stroke="#0a4e80" stroke-width=".7"/>
 <path d="M400 261 Q440 257 470 258 M470 259 Q500 259 527 265 M470 262 Q498 262 522 267 M470 265 Q496 265 516 269" stroke="#2ca8ea" stroke-width=".5" fill="none"/>
 <rect x="446" y="257" width="30" height="14" fill="#1a98e0"/>
 <path d="M446 271 L470 271 L470 273.5 L446 273.5Z" fill="#c8c8c8"/>
 <path d="M466 274 L492 276 L490 278.5 L466 276.5Z" fill="#d0d0d0"/>
 <path d="M376 259 Q420 252 450 253 Q500 254 530 261 L542 267" fill="none" stroke="#0c5a90" stroke-width=".8"/>
 <!-- blocks -->
 <path d="M450 245 L468.6 245 L468.6 257 L450 257Z" fill="#1a9ee4"/>
 <path d="M450 245 L455 245 L455 257 L450 257Z" fill="#30b8f4"/>
 <path d="M450.5 246 V256.5 H468.5" fill="none" stroke="#b8e040" stroke-width=".8"/>
 <path d="M523.6 254 L536.3 254 L536.3 266.5 L523.6 266.5Z" fill="#1a9ee4"/>
 <path d="M530 254 L536.3 254 L536.3 266.5 L530 266.5Z" fill="#2cb4f2"/>
 <path d="M524 266 H536.3 L540 268" fill="none" stroke="#b8e040" stroke-width=".8"/>
 <circle cx="452" cy="264" r=".8" fill="#0e66a4"/><circle cx="462" cy="262" r=".9" fill="#0e66a4"/><circle cx="468" cy="262" r=".6" fill="#a0e040"/>
 <!-- front apron -->
 <path d="M375 262 L450 273 L490 278 L490 296 L450 292 L375 282Z" fill="#1ca6ec"/>
 <path d="M375 263 L450 274 L490 279 L490 280.2 L450 275.2 L375 264.2Z" fill="#50ccf8"/>
 <path d="M375 266 L450 277 L490 282 L490 282.8 L450 277.8 L375 266.8Z" fill="#0e6eb0"/>
 <path d="M375 272 L450 283 L490 288 L490 288.8 L450 283.8 L375 272.8Z" fill="#1074b6"/>
 <g fill="#3cc0f6" stroke="#0c5e9c" stroke-width=".55">
  <ellipse cx="410" cy="278.3" rx="3.2" ry="1.6" transform="rotate(10 410 278.3)"/>
  <ellipse cx="416.5" cy="279.6" rx="2.6" ry="1.7" transform="rotate(10 416.5 279.6)"/>
  <ellipse cx="423" cy="280.6" rx="3" ry="1.9" transform="rotate(10 423 280.6)"/>
  <ellipse cx="430" cy="281.9" rx="2.6" ry="1.8" transform="rotate(10 430 281.9)"/>
  <ellipse cx="437" cy="283" rx="3" ry="1.9" transform="rotate(10 437 283)"/>
  <ellipse cx="443.8" cy="284" rx="2.8" ry="1.8" transform="rotate(10 443.8 284)"/>
 </g>
 <!-- right apron -->
 <path d="M502 277 L541 268.8 Q543.2 269.3 543 272 L542.4 287.4 L502 293.5Z" fill="#1a9ae0"/>
 <path d="M502 279.5 L542.6 271.4 L542.6 273.2 L502 281.3Z" fill="#4cc6f6"/>
 <path d="M502 284.6 L542.5 281.8 L542.5 282.8 L502 285.6Z" fill="#0e66a6"/>
 <path d="M502 277 L541 268.8" stroke="#0a4676" stroke-width="1.1"/>
 <!-- left front leg -->
 <path d="M363.4 255.6 Q370 257 374.7 261 L375 265 L375 276 L377 277 L377 281 L375 281.5 L375 285 Q380 288 379.7 293 Q379.5 298 375 300.5 L375 303 L377 303.5 L377 306 L376.5 306 L372.6 357 L373.5 358.5 L373 364 L371.3 364.5 L371.3 371.4 L364 371.4 L364 364.5 L362.2 364 L362 358.5 L363 357 L363 306 L362 306 L362 303.5 L364 303 L364 300.5 Q360.2 298 360.6 293 Q361 288 363.5 285 L363.5 281.5 L361.5 281 L361.5 277 L363.4 276Z" fill="#1ca6ec"/>
 <path d="M364.5 257 Q369 258.5 372 261 L371 264.5 L365 264.5Z" fill="#40c0f6"/>
 <path d="M366 266 L370 266 L370 276 L366 276Z" fill="#40c0f6"/>
 <path d="M363 265 H375 M361.5 277 H377 M361.5 281 H377 M363.5 285 H375 M364 300.5 H375 M362 303.5 H377 M362 306 H377 M362.5 358.5 H373 M363 364 H372.5" stroke="#0e66a6" stroke-width=".6"/>
 <path d="M366 306.5 L365.5 356 M370 306.5 L369 356" stroke="#4ccaf8" stroke-width=".8"/>
 <path d="M368 306.5 L367.3 356" stroke="#1276b8" stroke-width=".5"/>
 <path d="M364 288 Q363 293 364.5 298 M367 287 V299 M370.5 287 V299 M374 288 Q376 293 374 298" stroke="#1274b6" stroke-width=".5" fill="none"/>
 <!-- right front leg -->
 <path d="M487.6 279 Q487.6 274.4 495 274.4 Q502.4 274.4 502.4 279 L502.4 294.5 L504 295 L504 299.5 L503.7 301 Q506 307 505.5 312 Q504.5 316 502.5 318.5 L502 322 L499 323 L494 372 L495.5 374 L495 380 L494 380 L494 388.6 L487.5 388.6 L487.5 380 L485 380 L484.5 374 L486 372 L486 323 L485.5 318.5 Q483.5 315 484.2 310 Q484.5 304 486.5 301 L486 299.5 L486 295 L487.6 294.5Z" fill="#1ca6ec"/>
 <path d="M490 278 Q490.5 275.8 494 275.8 L496 275.8 L496 294 L490 294Z" fill="#44c2f6"/>
 <path d="M486 295 H504 M486 300 H504 M485.5 319 H503 M485 374 H495.5 M485.5 380 H495" stroke="#0e66a6" stroke-width=".7"/>
 <path d="M489 324 L488.5 371 M493 324 L491.5 371" stroke="#4ccaf8" stroke-width=".8"/>
 <path d="M491 324 L490 371" stroke="#1276b8" stroke-width=".5"/>
 <path d="M488 304 Q487 311 489 316 M493.5 303 V317 M498.5 304 Q500.5 311 498.5 316" stroke="#1274b6" stroke-width=".6" fill="none"/>
</g>
</svg>
</body></html>
